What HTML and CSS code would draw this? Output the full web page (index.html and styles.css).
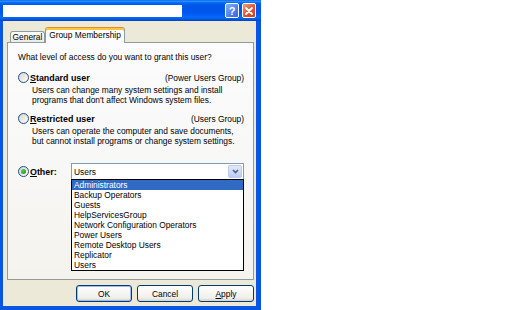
FILE: index.html
```html
<!DOCTYPE html>
<html lang="en">
<head>
    <meta charset="UTF-8">
    <title>User Properties</title>
    <link rel="stylesheet" href="styles.css">
</head>
<body>
    <div class="window">
        <div class="titlebar">
            <div class="title-blank"></div>
            <div class="title-buttons">
                <span class="tbtn help">?</span>
                <span class="tbtn close">
                    <svg width="8" height="8" viewBox="0 0 8 8">
                        <path d="M1 1 L7 7 M7 1 L1 7" stroke="#fff" stroke-width="1.8" stroke-linecap="round"/>
                    </svg>
                </span>
            </div>
        </div>

        <div class="client">
            <div class="tabs">
                <div class="tab tab-general">General</div>
                <div class="tab tab-group active">Group Membership</div>
            </div>

            <div class="panel">
                <p class="question">What level of access do you want to grant this user?</p>

                <div class="option">
                    <div class="option-head">
                        <span class="radio"></span>
                        <span class="option-label"><u>S</u>tandard user</span>
                        <span class="option-group">(Power Users Group)</span>
                    </div>
                    <p class="option-desc">Users can change many system settings and install<br>programs that don't affect Windows system files.</p>
                </div>

                <div class="option option-second">
                    <div class="option-head">
                        <span class="radio"></span>
                        <span class="option-label"><u>R</u>estricted user</span>
                        <span class="option-group">(Users Group)</span>
                    </div>
                    <p class="option-desc">Users can operate the computer and save documents,<br>but cannot install programs or change system settings.</p>
                </div>

                <div class="other">
                    <div class="other-choice">
                        <span class="radio checked"></span>
                        <span class="option-label"><u>O</u>ther:</span>
                    </div>
                    <div class="combo">
                        <div class="combo-field">
                            <span>Users</span>
                            <span class="combo-arrow">
                                <svg width="7" height="5" viewBox="0 0 7 5">
                                    <path d="M1 1 L3.5 3.5 L6 1" fill="none" stroke="#4D6185" stroke-width="1.6"/>
                                </svg>
                            </span>
                        </div>
                        <ul class="combo-list">
                            <li class="selected">Administrators</li>
                            <li>Backup Operators</li>
                            <li>Guests</li>
                            <li>HelpServicesGroup</li>
                            <li>Network Configuration Operators</li>
                            <li>Power Users</li>
                            <li>Remote Desktop Users</li>
                            <li>Replicator</li>
                            <li>Users</li>
                        </ul>
                    </div>
                </div>
            </div>

            <div class="buttons">
                <button class="btn default">OK</button>
                <button class="btn">Cancel</button>
                <button class="btn"><u>A</u>pply</button>
            </div>
        </div>
    </div>
</body>
</html>
```

FILE: styles.css
```css
body {
    margin: 0;
    background: #fff;
    font-family: "Liberation Sans", Arial, sans-serif;
    font-size: 8.4px;
    color: #000;
}
.window {
    width: 261px;
    height: 310px;
    background: #0A56E2;
    display: flex;
    flex-direction: column;
}
.titlebar {
    height: 21px;
    flex: none;
    display: flex;
    align-items: center;
    padding: 0 5px 0 3px;
    background: linear-gradient(#0058EE 0%, #3593FF 5%, #1A82FF 9%, #036FFC 12%, #0262EE 17%, #0057E5 25%, #0055EB 55%, #005BF5 68%, #026AFE 80%, #0062EF 88%, #0052D6 94%, #0043B8 100%);
}
.title-blank {
    width: 179px;
    height: 12px;
    background: #fff;
}
.title-buttons {
    margin-left: auto;
    display: flex;
    gap: 3px;
}
.tbtn {
    width: 14px;
    height: 15px;
    box-sizing: border-box;
    border: 1px solid #fff;
    border-radius: 2px;
    display: flex;
    align-items: center;
    justify-content: center;
    color: #fff;
    font: bold 11px "Liberation Sans", Arial, sans-serif;
}
.help {
    background: linear-gradient(135deg, #8AB2FA, #4A7FEC 60%, #3569DE);
}
.close {
    background: linear-gradient(135deg, #F0A085, #E0552D 55%, #C8421C);
}
.client {
    flex: 1;
    margin: 0 5px 4px 3px;
    padding: 6px 2px 0 4px;
    background: #ECE9D8;
    display: flex;
    flex-direction: column;
}
.tabs {
    display: flex;
    align-items: flex-end;
    height: 16px;
    margin: 0 0 -1px 3px;
    position: relative;
    z-index: 1;
}
.tab {
    box-sizing: border-box;
    height: 11px;
    margin-bottom: 1px;
    border: 1px solid #919B9C;
    border-bottom: 0;
    border-radius: 3px 3px 0 0;
    background: linear-gradient(#fff, #ECEBE6);
    line-height: 10px;
    text-align: center;
}
.tab-general {
    width: 35px;
}
.tab-group {
    width: 80px;
}
.tab.active {
    height: 16px;
    margin-bottom: 0;
    padding-top: 2px;
    border-top-color: #E68B2C;
    background: #FCFCFE;
    box-shadow: inset 0 2px 0 #FFC83C;
}
.panel {
    height: 238px;
    box-sizing: border-box;
    border: 1px solid #919B9C;
    background: linear-gradient(#FCFCFE, #F4F3EE);
    padding: 9px 9px 0 10px;
}
.question {
    margin: 0;
    line-height: 10px;
}
.option {
    margin-top: 10px;
}
.option-second {
    margin-top: 8px;
}
.option-head {
    display: flex;
    align-items: center;
    height: 11px;
}
.radio {
    flex: none;
    width: 11px;
    height: 11px;
    box-sizing: border-box;
    margin-right: 1px;
    border: 1px solid #1C5180;
    border-radius: 50%;
    background: linear-gradient(135deg, #D6D4CB, #fff);
    display: flex;
    align-items: center;
    justify-content: center;
}
.radio.checked::after {
    content: "";
    width: 5px;
    height: 5px;
    border-radius: 50%;
    background: radial-gradient(circle at 35% 35%, #55D05A, #21A121 70%);
}
.option-label {
    font-weight: bold;
    font-size: 8.9px;
}
.option-group {
    margin-left: auto;
}
.option-desc {
    margin: 3px 0 0 14px;
    line-height: 9.5px;
}
.other {
    display: flex;
    align-items: center;
    margin-top: 17px;
}
.other-choice {
    width: 53px;
    flex: none;
    display: flex;
    align-items: center;
}
.combo {
    width: 175px;
    position: relative;
}
.combo-field {
    height: 17px;
    box-sizing: border-box;
    border: 1px solid #7F9DB9;
    background: #fff;
    display: flex;
    align-items: center;
    padding: 0 1px 0 2px;
}
.combo-arrow {
    margin-left: auto;
    width: 14px;
    height: 13px;
    box-sizing: border-box;
    border: 1px solid #BACBEF;
    border-radius: 2px;
    background: linear-gradient(#E2E9FB, #BDCDF2);
    display: flex;
    align-items: center;
    justify-content: center;
}
.combo-list {
    position: absolute;
    top: 16px;
    left: 0;
    width: 100%;
    box-sizing: border-box;
    margin: 0;
    padding: 0;
    list-style: none;
    border: 1px solid #000;
    background: #fff;
}
.combo-list li {
    line-height: 10px;
    padding-left: 2px;
}
.combo-list li.selected {
    background: #316AC5;
    color: #fff;
}
.buttons {
    display: flex;
    justify-content: flex-end;
    gap: 5px;
    margin-top: 5px;
}
.btn {
    width: 56px;
    height: 17px;
    box-sizing: border-box;
    padding: 0;
    border: 1px solid #003C74;
    border-radius: 3px;
    background: linear-gradient(#FFFFFF, #F0EFEA 80%, #D8D2C6);
    font: inherit;
    color: #000;
}
.btn.default {
    box-shadow: inset 0 0 0 1px #9DBCEB;
}
```
